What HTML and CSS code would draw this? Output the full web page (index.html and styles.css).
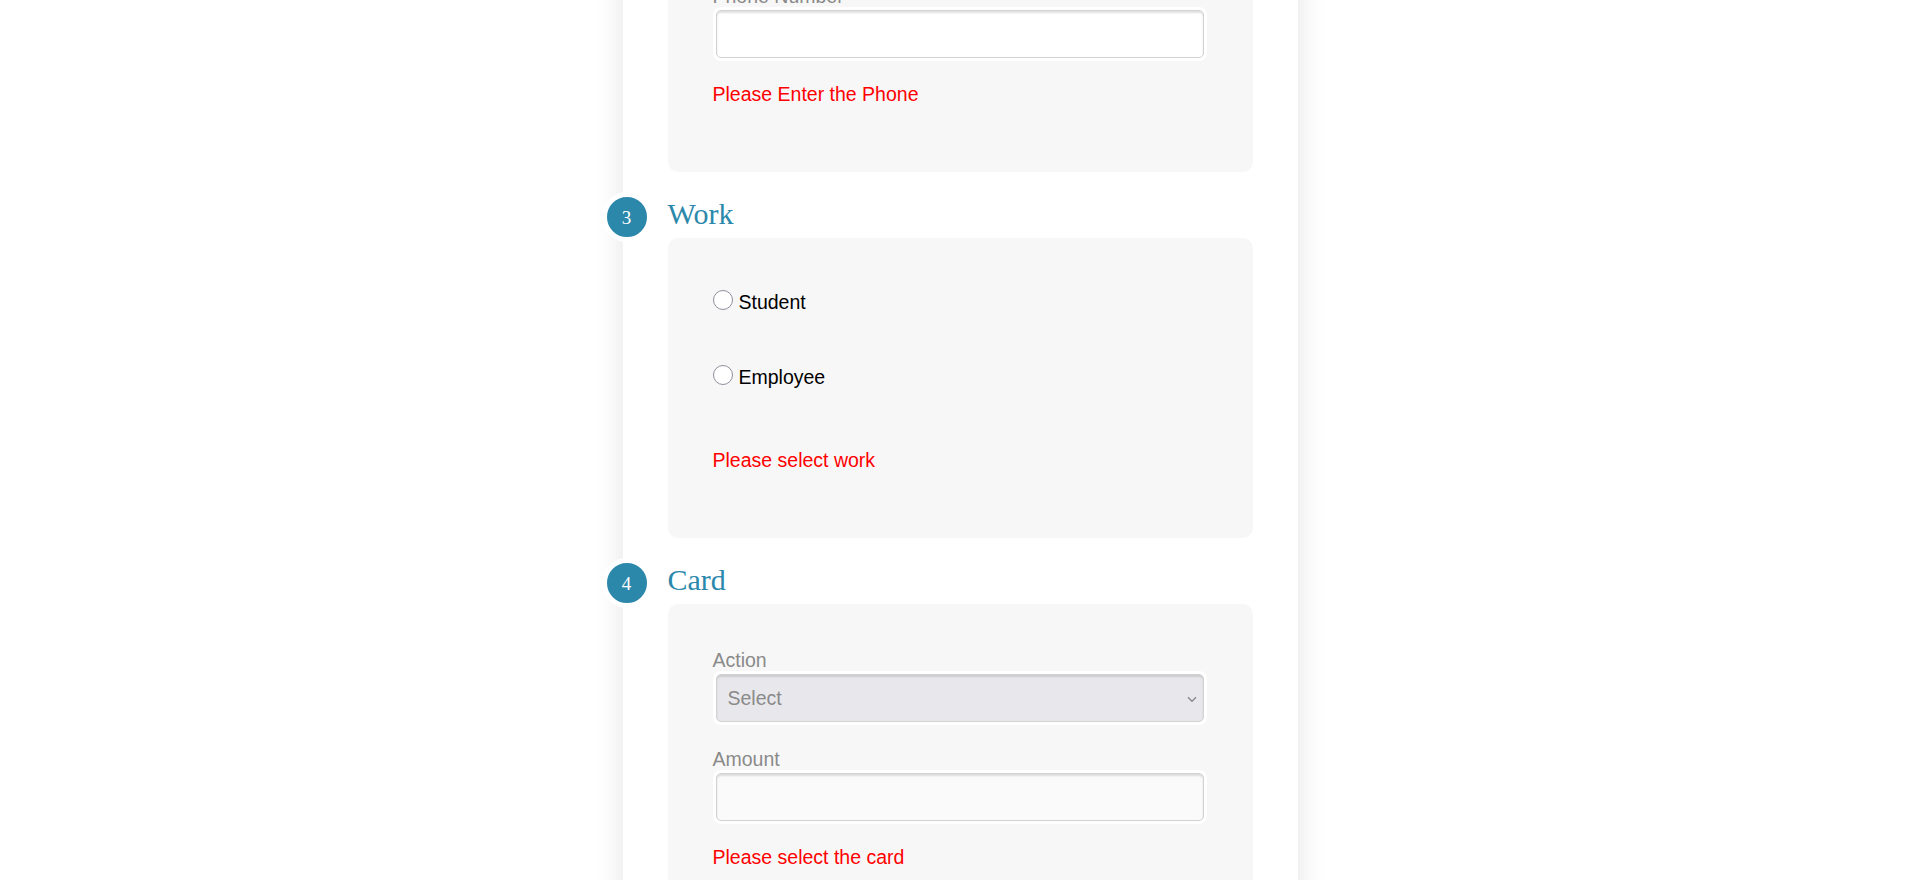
FILE: index.html
```html
<!DOCTYPE html>
<html lang="en">
<head>
<meta charset="utf-8">
<title>Form</title>
<link rel="stylesheet" href="styles.css">
</head>
<body>
<div class="panel">
  <section class="step">
    <div class="card">
      <div class="field">
        <label class="field-label">Phone Number</label>
        <input class="text-input" type="text">
      </div>
      <p class="error">Please Enter the Phone</p>
    </div>
  </section>

  <section class="step">
    <div class="step-head">
      <span class="step-num">3</span>
      <h2 class="step-title">Work</h2>
    </div>
    <div class="card">
      <div class="radio-list">
        <label class="radio-row"><input class="radio" type="radio" name="work"><span>Student</span></label>
        <label class="radio-row"><input class="radio" type="radio" name="work"><span>Employee</span></label>
      </div>
      <p class="error error--work">Please select work</p>
    </div>
  </section>

  <section class="step">
    <div class="step-head">
      <span class="step-num">4</span>
      <h2 class="step-title">Card</h2>
    </div>
    <div class="card">
      <div class="field">
        <label class="field-label">Action</label>
        <div class="select-wrap">
          <select class="text-input text-input--select">
            <option>Select</option>
          </select>
          <svg class="chevron" width="10" height="7" viewBox="0 0 10 7"><path d="M1 1.2 L5 5.2 L9 1.2" fill="none" stroke="#8a8a8a" stroke-width="1.4"/></svg>
        </div>
      </div>
      <div class="field">
        <label class="field-label">Amount</label>
        <input class="text-input text-input--soft" type="text">
      </div>
      <p class="error">Please select the card</p>
    </div>
  </section>
</div>
</body>
</html>
```

FILE: styles.css
```css
html, body {
  margin: 0;
  background: #fff;
  font-family: "Liberation Sans", Arial, sans-serif;
}

.panel {
  box-sizing: border-box;
  width: 675px;
  margin: -60px auto 0;
  padding: 0 45px 60px;
  background: #fff;
  box-shadow: 0 0 28px rgba(0, 0, 0, 0.11);
}

.card {
  display: flex;
  flex-direction: column;
  background: #f7f7f7;
  border-radius: 10px;
  padding: 45px 46px 67px 45px;
}

.step-head {
  display: flex;
  align-items: flex-start;
  height: 40px;
  margin-top: 26px;
}

.step-num {
  box-sizing: border-box;
  width: 50px;
  height: 50px;
  flex-shrink: 0;
  margin: -6px 16px 0 -66px;
  border: 5px solid #fff;
  border-radius: 50%;
  background: #2b88ab;
  color: #fff;
  display: flex;
  align-items: center;
  justify-content: center;
  font-family: "Liberation Serif", "Times New Roman", serif;
  font-size: 19px;
  line-height: 1;
}

.step-title {
  margin: 1px 0 0;
  font-family: "Liberation Serif", "Times New Roman", serif;
  font-weight: 400;
  font-size: 30px;
  line-height: 30px;
  color: #2b88ab;
}

.field {
  display: flex;
  flex-direction: column;
}

.field + .field {
  margin-top: 23px;
}

.field-label {
  display: block;
  font-size: 19.5px;
  line-height: 22px;
  color: #8a8a8a;
}

.text-input {
  display: block;
  box-sizing: border-box;
  width: 488px;
  height: 48px;
  margin: 3px;
  padding: 0 10px;
  border: 1px solid #d2d2d2;
  border-radius: 5px;
  background: #fff;
  box-shadow: 0 0 0 3px #fff, inset 0 2px 2px rgba(0, 0, 0, 0.12);
  font-family: inherit;
  font-size: 19.5px;
  color: #8a8a8a;
  outline: none;
}

.text-input--soft {
  background: #fafafa;
}

.select-wrap {
  position: relative;
  display: flex;
  width: 494px;
}

.text-input--select {
  appearance: none;
  -webkit-appearance: none;
  background: #e8e8ec;
  padding-left: 11px;
}

.chevron {
  position: absolute;
  right: 10px;
  top: 25px;
}

.radio-list {
  margin-top: 8px;
  display: flex;
  flex-direction: column;
  gap: 53px;
}

.radio-row {
  display: flex;
  align-items: flex-start;
  font-size: 19.5px;
  line-height: 22px;
  color: #000;
}

.radio {
  appearance: none;
  -webkit-appearance: none;
  box-sizing: border-box;
  width: 20px;
  height: 20px;
  flex-shrink: 0;
  margin: -1px 6px 0 0;
  border: 1px solid #8f8f9d;
  border-radius: 50%;
  background: #fff;
}

.error {
  margin: 22px 0 0;
  font-size: 19.5px;
  line-height: 22px;
  color: #ff0000;
}

.error--work {
  margin-top: 61px;
}
```
